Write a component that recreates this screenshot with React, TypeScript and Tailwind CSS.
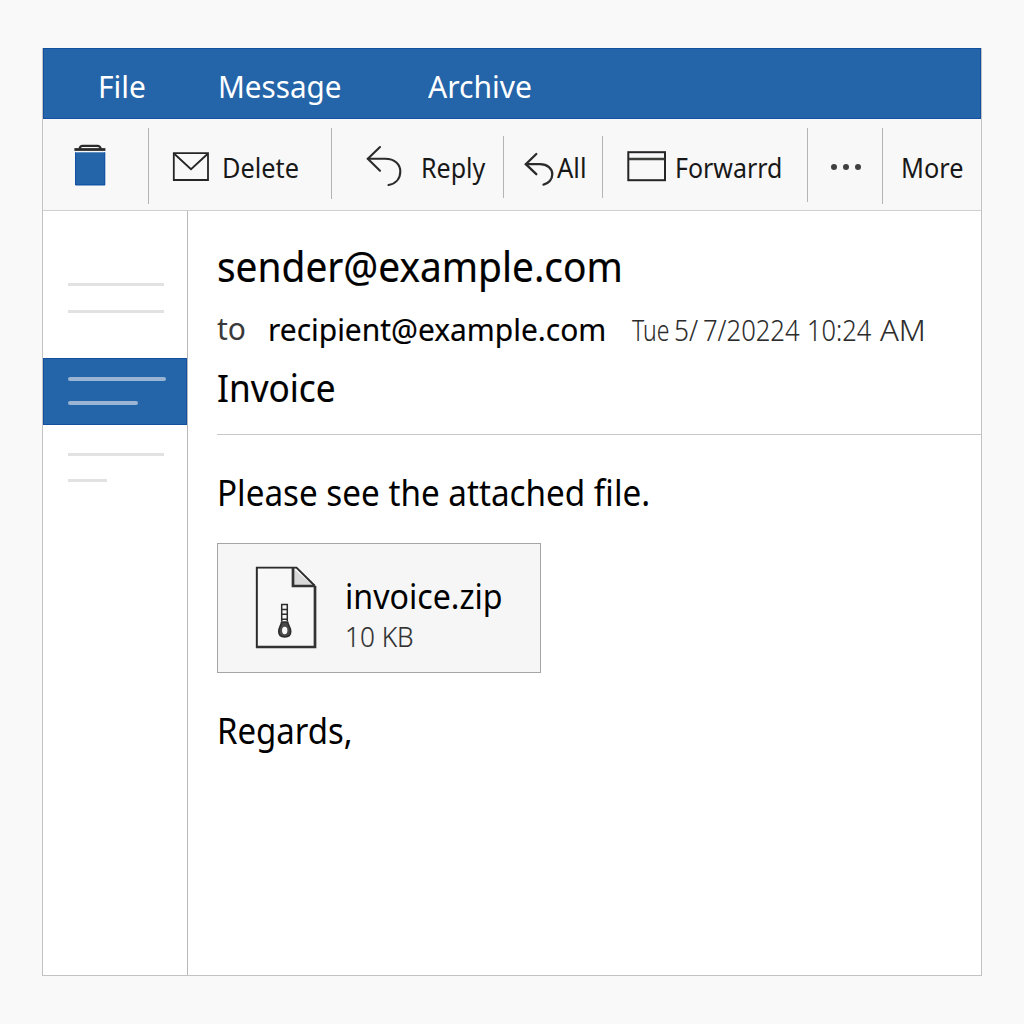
import type { ReactNode } from "react";

const font = "font-['Noto_Sans','Open_Sans',sans-serif]";

function Text({ className = "", children }: { className?: string; children: ReactNode }) {
  return <span className={`block shrink-0 origin-left whitespace-pre ${className}`}>{children}</span>;
}

function Separator({ className = "" }: { className?: string }) {
  return <div className={`w-px shrink-0 bg-[#b4b4b4] ${className}`} />;
}

function TrashIcon() {
  return (
    <svg width="34" height="44" viewBox="73 143 34 44" className="block shrink-0">
      <rect x="75.5" y="152.3" width="29.5" height="33" fill="#2464a9" />
      <path d="M75.5 185V152.3M104.8 152.3V185M75.5 184.8H105" stroke="#1150a5" strokeWidth="1" fill="none" />
      <path d="M74.4 149.5H105.4" stroke="#2a2a2a" strokeWidth="2.8" />
      <path d="M79.5 149C80 146.2 81 145.9 82.5 145.9H97.5C99 145.9 100.2 146.4 101 149" stroke="#2a2a2a" strokeWidth="2.1" fill="none" />
    </svg>
  );
}

function MailIcon() {
  return (
    <svg width="38" height="32" viewBox="172 151 38 32" className="block shrink-0" fill="none" stroke="#252525" strokeWidth="1.8">
      <path d="M173.8 153.2H208V180H173.8Z" />
      <path d="M174.5 154L191 169.2L207.5 154" />
    </svg>
  );
}

function ReplyIcon() {
  return (
    <svg width="38" height="44" viewBox="365 144 38 44" className="block shrink-0" fill="none" stroke="#2b2b2b" strokeWidth="2.1" strokeLinecap="round">
      <path d="M380 147L367.8 158.8L380 170.8" />
      <path d="M368 158.8H385C395 158.8 400.3 164.5 400.3 171.5C400.3 178.5 396 183.8 388.5 185" />
    </svg>
  );
}

function ReplyAllIcon() {
  return (
    <svg width="31" height="36" viewBox="524 151 31 36" className="block shrink-0" fill="none" stroke="#2b2b2b" strokeWidth="2.3" strokeLinecap="round">
      <path d="M536.3 154L525.8 164.2L536.3 174.2" />
      <path d="M526 164.2H540C547.5 164.2 552.3 168.8 552.3 174.2C552.3 179.5 548.5 183.6 543.5 184.6" />
    </svg>
  );
}

function WindowIcon() {
  return (
    <svg width="40" height="32" viewBox="627 150 40 32" className="block shrink-0" fill="none" stroke="#252525">
      <rect x="628.3" y="152.2" width="36.7" height="28" strokeWidth="2" />
      <path d="M629 159H664.5" strokeWidth="2.7" stroke="#3b403d" />
    </svg>
  );
}

function ZipFileIcon() {
  return (
    <svg width="62" height="84" viewBox="255 566 62 84" className="block shrink-0" fill="none" stroke="#2b2b2b">
      <path d="M256.8 567.6H296.5L314.8 586V647.4H256.8Z" fill="#f8f8f8" />
      <path d="M293 568.5V586H314Z" fill="#d9d9d9" stroke="none" />
      <path d="M256.8 648V567.6H296.5L315 586" strokeWidth="1.9" />
      <path d="M256 647H315V586" strokeWidth="2.7" stroke="#333" />
      <path d="M293 567.5V586H315" strokeWidth="2.7" stroke="#333" />
      <path d="M281.7 604V621M287.3 604V621M281.2 604.6H287.8M281.5 609.5H287.5M281.5 614.3H287.5M281.5 619.2H287.5" strokeWidth="1.5" />
      <path d="M281.6 622C281 626 278.8 627 278.8 631.5C278.8 635 281.2 636.9 284.7 636.9C288.2 636.9 290.7 635 290.7 631.5C290.7 627 288.3 626 287.6 622Z" fill="#4a4a4a" strokeWidth="1.6" />
      <ellipse cx="284.7" cy="630.5" rx="2.7" ry="3.7" fill="#f8f8f8" stroke="none" />
    </svg>
  );
}

function MenuBar() {
  return (
    <nav className="flex h-[71px] items-start border border-[#1450a0] bg-[#2464a9] pt-[13px] text-[31.5px] leading-[48px] text-white">
      <Text className="ml-[54px] w-[119.5px] scale-x-[0.95]">File</Text>
      <Text className="w-[210px] scale-x-[0.94]">Message</Text>
      <Text className="scale-x-[0.955]">Archive</Text>
    </nav>
  );
}

function Toolbar() {
  return (
    <div className="flex h-[92px] items-start border-b border-[#cfcfcf] bg-[#f8f8f8] text-[27.5px] leading-[40px] text-[#181818]">
      <div className="w-[105px] pt-6 pl-[30px]"><TrashIcon /></div>
      <Separator className="mt-[9px] h-[76px]" />
      <div className="flex w-[182px] pl-[23px] pt-[29px]">
        <div className="pt-[3px]"><MailIcon /></div>
        <Text className="ml-3 scale-x-[0.92]">Delete</Text>
      </div>
      <Separator className="mt-[9px] h-[71px]" />
      <div className="flex w-[171px] pl-[33px] pt-[29px]">
        <div className="-mt-1"><ReplyIcon /></div>
        <Text className="ml-[17.5px] scale-x-[0.91]">Reply</Text>
      </div>
      <Separator className="mt-[17px] h-[62px]" />
      <div className="flex w-[98px] pl-5 pt-[29px]">
        <div className="pt-[3px]"><ReplyAllIcon /></div>
        <Text className="ml-0.5 scale-x-[0.93]">All</Text>
      </div>
      <Separator className="mt-[17px] h-[62px]" />
      <div className="flex w-[204px] pl-6 pt-[29px]">
        <div className="pt-0.5"><WindowIcon /></div>
        <Text className="ml-2 scale-x-[0.907]">Forwarrd</Text>
      </div>
      <Separator className="mt-[9px] h-[74px]" />
      <div className="flex w-[74px] gap-[6px] pl-[23px] pt-[45px]">
        <i className="size-1.5 rounded-full bg-[#404040]" />
        <i className="size-1.5 rounded-full bg-[#404040]" />
        <i className="size-1.5 rounded-full bg-[#404040]" />
      </div>
      <Separator className="mt-[9px] h-[76px]" />
      <Text className="mt-[29px] ml-[18px] scale-x-[0.92]">More</Text>
    </div>
  );
}

function Sidebar() {
  return (
    <aside className="flex w-[145px] shrink-0 flex-col border-r border-[#b8b8b8]">
      <div className="flex h-[147px] flex-col gap-6 pt-[72px] pl-[25px]">
        <div className="h-[3px] w-24 bg-[#e2e2e2]" />
        <div className="h-[3px] w-24 bg-[#e2e2e2]" />
      </div>
      <div className="flex h-[67px] flex-col gap-5 border border-[#1450a0] bg-[#2464a9] pt-[18px] pl-6">
        <div className="h-1 w-[98px] rounded-full bg-[#9ab4d3]" />
        <div className="h-1 w-[70px] rounded-full bg-[#9ab4d3]" />
      </div>
      <div className="flex flex-col gap-[23px] pt-7 pl-[25px]">
        <div className="h-[3px] w-24 bg-[#e2e2e2]" />
        <div className="h-[3px] w-[39px] bg-[#e2e2e2]" />
      </div>
    </aside>
  );
}

function Attachment() {
  return (
    <div className="mt-[23px] flex h-[130px] w-[324px] border border-[#a5a5a5] bg-[#f6f6f6] pt-[22px] pl-[37px]">
      <ZipFileIcon />
      <div className="ml-[28px] pt-[6px]">
        <Text className="text-[34.5px] leading-[48px] text-black scale-x-[0.932]">invoice.zip</Text>
        <Text className="-mt-1 text-[28px] leading-[40px] font-light text-[#303030] scale-x-[0.935] [-webkit-text-stroke:0.15px_#303030]">10 KB</Text>
      </div>
    </div>
  );
}

function Message() {
  return (
    <main className="flex min-w-0 flex-1 flex-col pl-[29px] text-black">
      <Text className="mt-[24px] w-[444px] text-[42.5px] leading-[62px] scale-x-[0.914] [-webkit-text-stroke:0.2px_black]">sender@example.com</Text>
      <div className="mt-[7px] flex h-[50px] leading-[50px]">
        <Text className="w-[51px] text-[30px] text-[#3a3a3a]">to</Text>
        <Text className="w-[364px] text-[31.5px] scale-x-[0.95] [-webkit-text-stroke:0.15px_black]">recipient@example.com</Text>
        <div className="flex pt-px text-[29.5px] font-light text-[#2b2b2b] [-webkit-text-stroke:0.1px_#2b2b2b]">
          <Text className="w-[42px] scale-x-[0.78]">Tue</Text>
          <Text className="w-[29px] scale-x-[0.89]">5/</Text>
          <Text className="w-[104px] scale-x-[0.868]">7/20224</Text>
          <Text className="w-[73px] scale-x-[0.86]">10:24</Text>
          <Text className="scale-x-[1.05]">AM</Text>
        </div>
      </div>
      <Text className="mt-[5px] w-[129px] text-[38px] leading-[56px] scale-x-[0.925] [-webkit-text-stroke:0.15px_black]">Invoice</Text>
      <div className="mt-[19px] h-px bg-[#c8c8c8]" />
      <Text className="mt-[31px] w-[470px] text-[36px] leading-[54px] scale-x-[0.923]">Please see the attached file.</Text>
      <Attachment />
      <Text className="mt-[31px] w-[149px] text-[36px] leading-[54px] scale-x-[0.915]">Regards,</Text>
    </main>
  );
}

export default function App() {
  return (
    <div className={`flex h-[1024px] w-[1024px] flex-col bg-[#f9f9f9] pt-12 pl-[42px] ${font}`}>
      <div className="flex h-[928px] w-[940px] flex-col border-x border-b border-[#c2c2c2] bg-white">
        <MenuBar />
        <Toolbar />
        <div className="flex min-h-0 flex-1">
          <Sidebar />
          <Message />
        </div>
      </div>
    </div>
  );
}
